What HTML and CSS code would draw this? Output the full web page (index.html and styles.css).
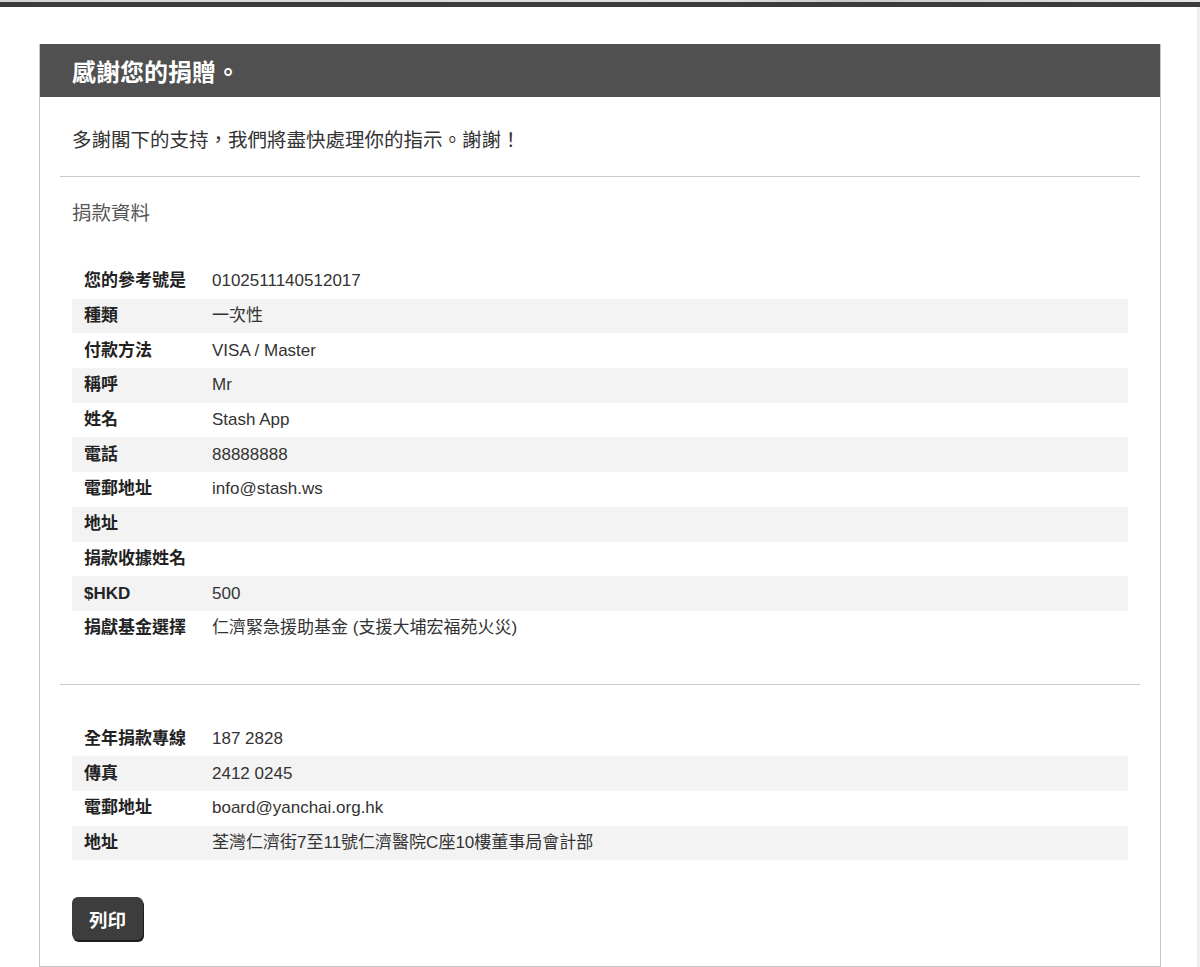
FILE: index.html
```html
<!DOCTYPE html>
<html lang="zh-Hant">
<head>
<meta charset="utf-8">
<title>感謝您的捐贈</title>
<link rel="stylesheet" href="styles.css">
</head>
<body>
<div class="top"></div>
<div class="topbar"></div>
<div class="page">
  <div class="card">
    <div class="card-head">感謝您的捐贈。</div>
    <div class="card-body">
      <p class="intro">多謝閣下的支持，我們將盡快處理你的指示。謝謝！</p>
      <hr class="rule">
      <h2 class="section-title">捐款資料</h2>
      <table class="info info-main">
        <tr><th>您的參考號是</th><td>0102511140512017</td></tr>
        <tr><th>種類</th><td>一次性</td></tr>
        <tr><th>付款方法</th><td>VISA / Master</td></tr>
        <tr><th>稱呼</th><td>Mr</td></tr>
        <tr><th>姓名</th><td>Stash App</td></tr>
        <tr><th>電話</th><td>88888888</td></tr>
        <tr><th>電郵地址</th><td>info@stash.ws</td></tr>
        <tr><th>地址</th><td></td></tr>
        <tr><th>捐款收據姓名</th><td></td></tr>
        <tr><th>$HKD</th><td>500</td></tr>
        <tr><th>捐獻基金選擇</th><td>仁濟緊急援助基金 (支援大埔宏福苑火災)</td></tr>
      </table>
      <hr class="rule rule-2">
      <table class="info info-contact">
        <tr><th>全年捐款專線</th><td>187 2828</td></tr>
        <tr><th>傳真</th><td>2412 0245</td></tr>
        <tr><th>電郵地址</th><td>board@yanchai.org.hk</td></tr>
        <tr><th>地址</th><td>荃灣仁濟街7至11號仁濟醫院C座10樓董事局會計部</td></tr>
      </table>
      <div class="actions">
        <button class="btn" type="button">列印</button>
      </div>
    </div>
  </div>
</div>
</body>
</html>
```

FILE: styles.css
```css
html, body {
  margin: 0;
  padding: 0;
  background: #ffffff;
}
body {
  font-family: "Liberation Sans", Arial, "Noto Sans CJK TC", sans-serif;
  color: #333333;
  font-size: 17px;
}
.top {
  height: 2px;
  background: linear-gradient(to right, #d4d4d4 0%, #e0e0e0 60%, #c9c9c9 70%, #e6e6e6 100%);
}
.topbar {
  height: 5px;
  background: #3b3b3b;
}
.page {
  padding: 37px 39px 0 39px;
  border-right: 3px solid #f0f0f0;
}
.card {
  border: 1px solid #c6c6c6;
  border-top: none;
  width: 1120px;
}
.card-head {
  height: 53px;
  background: #505050;
  color: #ffffff;
  font-size: 24px;
  font-weight: bold;
  display: flex;
  align-items: center;
  padding-left: 32px;
  padding-bottom: 1px;
  box-sizing: border-box;
}
.card-body {
  padding: 0 20px 26px 20px;
}
.intro {
  margin: 0;
  padding: 31px 12px 24px 12px;
  line-height: 24px;
  font-size: 19.5px;
  color: #333333;
}
.rule {
  margin: 0;
  border: none;
  border-top: 1px solid #cccccc;
  height: 0;
}
.section-title {
  margin: 0;
  padding: 24px 12px 0 12px;
  line-height: 24px;
  font-size: 19.5px;
  font-weight: normal;
  color: #555555;
}
.info {
  border-collapse: collapse;
  width: calc(100% - 24px);
  margin: 0 12px;
}
.info-main {
  margin-top: 39px;
}
.info-contact {
  margin-top: 37px;
}
.info th,
.info td {
  height: 34.7px;
  padding: 0 12px;
  font-size: 17px;
  text-align: left;
  vertical-align: middle;
  line-height: 20px;
}
.info th {
  width: 104px;
  white-space: nowrap;
  font-weight: bold;
  color: #222222;
}
.info td {
  color: #333333;
}
.info tr:nth-child(even) {
  background: #f3f3f3;
}
.rule-2 {
  margin-top: 38px;
}
.actions {
  padding: 37px 12px 0 12px;
}
.btn {
  width: 71px;
  height: 43px;
  border: none;
  border-radius: 6px;
  background: #3d3d3d;
  color: #ffffff;
  font-family: "Liberation Sans", Arial, "Noto Sans CJK TC", sans-serif;
  font-size: 18.5px;
  font-weight: bold;
  box-shadow: 1px 2px 0 #1e1e1e;
  cursor: pointer;
  padding: 0;
}
```
